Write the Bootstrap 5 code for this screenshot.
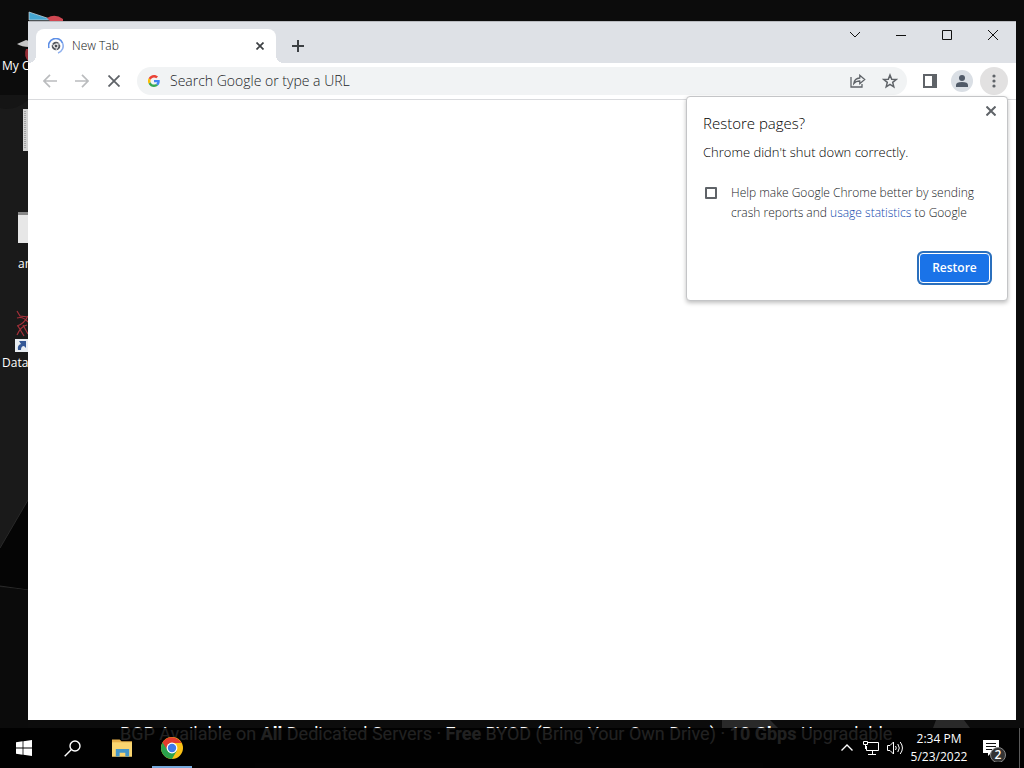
<!DOCTYPE html>
<html lang="en">
<head>
<meta charset="utf-8">
<meta name="viewport" content="width=device-width, initial-scale=1">
<title>New Tab</title>
<link href="https://cdn.jsdelivr.net/npm/bootstrap@5.3.0/dist/css/bootstrap.min.css" rel="stylesheet">
<style>
body { font-family: "Open Sans", "Noto Sans", sans-serif; font-size: 12px; font-weight: 300; line-height: 16px; background: #0c0c0c; }
button { border: 0; background: transparent; padding: 0; color: inherit; }
svg { display: block; flex: none; }
.wallpaper { top: 0; left: 0; }
.desk-label { color: #fff; font-weight: 400; left: 2px; white-space: nowrap; }
.banner { left: 120px; bottom: 19px; color: #fff; font-family: Roboto, "Open Sans", sans-serif; font-size: 18px; font-weight: 400; line-height: 30px; white-space: nowrap; }
.browser { top: 21px; left: 28px; right: 8px; bottom: 48px; background: #fff; }
.titlebar { height: 42px; background: #dee1e6; border-top: 1px solid #b9bbc0; padding-left: 8px; }
.tab { width: 240px; height: 34px; margin-top: 7px; padding: 0 8px 0 12px; background: #fff; border-radius: 8px 8px 0 0; color: #111; }
.tab::before, .tab::after { content: ""; position: absolute; bottom: 0; width: 8px; height: 8px; }
.tab::before { left: -8px; background: radial-gradient(circle at 0 0, transparent 8px, #fff 8px); }
.tab::after { right: -8px; background: radial-gradient(circle at 100% 0, transparent 8px, #fff 8px); }
.new-tab { width: 28px; height: 28px; margin: 10px 0 0 8px; }
.win-btn { width: 46px; height: 26px; color: #111; }
.toolbar { height: 37px; padding: 0 8px; border-bottom: 1px solid #d9dadd; }
.tool { width: 28px; height: 28px; color: #5f6368; }
.tool-dim { color: #babcbe; }
.tool-open { background: #e2e1e1; }
.omnibox { height: 28px; background: #f1f3f4; border-radius: 14px; padding: 0 3px 0 11px; margin: 0 9px 0 9px; }
.omnibox input { border: 0; background: transparent; outline: 0; padding: 0; margin-left: 10px; font-size: 14px; font-weight: 300; line-height: 20px; min-width: 0; }
.omnibox input::placeholder { color: #222427; opacity: 1; }
.bubble { top: 75px; right: 8px; width: 322px; height: 205px; padding: 16px 16px 16px; background: #fff; border: 1px solid #c4c5c7; border-radius: 4px; box-shadow: 0 2px 4px rgba(0,0,0,.25); color: #000; }
.bubble h1 { font-size: 15px; line-height: 20px; margin: 0 0 11px; font-weight: 300; }
.bubble p { font-size: 13px; line-height: 16px; margin: 0 0 23px; }
.bubble-close { top: 4px; right: 6px; width: 20px; height: 20px; color: #5f6368; }
.consent { padding-left: 2px; gap: 14px; line-height: 20px; color: #222427; }
.consent input { appearance: none; width: 12px; height: 12px; margin: 4px 0 0; border: 2px solid #5f6368; border-radius: 1px; flex: none; }
.consent a { color: #0f47ad; text-decoration: none; }
.restore { width: 71px; height: 30px; background: #1a73e8; color: #fff; font-weight: 600; border: 1px solid #fff; border-radius: 4px; box-shadow: 0 0 0 2px #2a6fbd; margin: 30px 1px 0 0; }
.taskbar { left: 0; right: 0; bottom: 0; height: 40px; background: rgba(0,0,0,.87); color: #fff; }
.task { width: 48px; height: 40px; }
.task-gap { margin-left: 2px; }
.task-active::after { content: ""; position: absolute; left: 4px; right: 4px; bottom: 0; height: 2px; background: #76a9dc; }
.tray { width: 24px; height: 40px; }
.clock { width: 64px; line-height: 18px; padding-top: 2px; font-weight: 400; }
.peek { width: 5px; border-left: 1px solid #5a5a5a; }
</style>
</head>
<body class="vh-100 overflow-hidden position-relative">
<svg class="wallpaper position-absolute w-100 h-100" aria-hidden="true">
  <rect y="95" width="40" height="500" fill="#1a1a1a"/>
  <path d="M0 95h28v5Q14 112 0 108z" fill="#151515"/>
  <path d="M0 548 28 500V590L0 586z" fill="#050505"/>
  <path d="M0 548 28 500M0 586l28 4" stroke="#292929" fill="none"/>
  <path d="M0 587l28 3v178H0z" fill="#0b0b0b"/>
  <path d="M722 720h48l8 8h-56zM936 720h28l6 8h-37z" fill="#292929"/>
  <path d="M29 12l24 8H29z" fill="#46a6d2" stroke="#c8d9e0" stroke-width=".7"/>
  <path d="M47 18q8-5 16 1v2H50z" fill="#d04852"/>
  <path d="M17 44l9-4 3 1v6q-7 0-12-3z" fill="#c5c5c5"/>
  <path d="M26 49h3v13q-6-6-3-13z" fill="#952c35"/>
  <path d="M23 109h6v42h-6z" fill="#d3d3d3"/>
  <path d="M25 111v38" stroke="#777" stroke-dasharray="1 1"/>
  <path d="M18 212h11v31H18z" fill="#e7e7e7"/><path d="M18 212h11v3H18z" fill="#888"/>
  <path d="M17 311l3 5 8 1M17 318q6-2 11 4M17 326q7-2 11-10M17 335q4-9 10-10M18 326l6 10M23 325l5 9" fill="none" stroke="#a5303a" stroke-width="1.200"/>
  <path d="M15 339h13v13H15z" fill="#e8edf2"/>
  <path d="M18 350q-1-5 3-6l-2-3h7v7l-2-2q-3 0-3 4z" fill="#345896"/>
</svg>
<div class="desk-label position-absolute" style="top:58px">My C</div>
<div class="desk-label position-absolute ps-3" style="top:256px">ar</div>
<div class="desk-label position-absolute" style="top:355px">Data</div>
<div class="banner position-absolute">BGP Available on <b>All</b> Dedicated Servers · <b>Free</b> BYOD (Bring Your Own Drive) · <b>10 Gbps</b> Upgradable</div>

<main class="browser position-absolute">
  <div class="titlebar d-flex align-items-start">
    <div class="tab d-flex align-items-center position-relative">
      <svg width="16" height="16" viewBox="0 0 16 16" fill="none"><path d="M1 10A7.200 7.200 0 0 1 14.500 5" stroke="#5c8ee6" stroke-width="1.600"/><path d="M14.500 5A7.200 7.200 0 0 1 10 14.900" stroke="#8fb0ee" stroke-width="1.600"/><circle cx="8" cy="8" r="4.300" fill="#555960"/><circle cx="8" cy="8" r="2" fill="#4a4d52" stroke="#fff"/><path d="M8 6h4M6.200 9 4.500 6M9.500 9.500 8 12" stroke="#fff" stroke-width=".8"/></svg>
      <span class="ms-2 flex-grow-1">New Tab</span>
      <button aria-label="Close tab" class="p-1"><svg width="8" height="8" viewBox="0 0 8 8" stroke="#3c4043" stroke-width="1.700"><path d="M.5.5l7 7M7.500.5l-7 7"/></svg></button>
    </div>
    <button class="new-tab d-flex align-items-center justify-content-center" aria-label="New tab"><svg width="12" height="12" viewBox="0 0 12 12" stroke="#3c4043" stroke-width="2"><path d="M6 0v12M0 6h12"/></svg></button>
    <div class="d-flex ms-auto">
      <button class="win-btn d-flex align-items-center justify-content-center" aria-label="Search tabs"><svg width="12" height="8" viewBox="0 0 12 8" fill="none" stroke="currentColor"><path d="M1 1l5 5 5-5"/></svg></button>
      <button class="win-btn d-flex align-items-center justify-content-center" aria-label="Minimize"><svg width="10" height="10" viewBox="0 0 10 10" stroke="currentColor"><path d="M0 5.500h10"/></svg></button>
      <button class="win-btn d-flex align-items-center justify-content-center" aria-label="Maximize"><svg width="10" height="10" viewBox="0 0 10 10" fill="none" stroke="currentColor"><path d="M.5.5h9v9h-9z"/></svg></button>
      <button class="win-btn d-flex align-items-center justify-content-center" aria-label="Close"><svg width="10" height="10" viewBox="0 0 10 10" stroke="currentColor"><path d="M0 0l10 10M10 0 0 10"/></svg></button>
    </div>
  </div>
  <div class="toolbar d-flex align-items-center">
    <div class="d-flex gap-1">
      <button class="tool tool-dim d-flex align-items-center justify-content-center" aria-label="Back"><svg width="14" height="14" viewBox="0 0 14 14" fill="none" stroke="currentColor" stroke-width="1.700"><path d="M14 7H1.500M7 .8.9 7 7 13.200"/></svg></button>
      <button class="tool tool-dim d-flex align-items-center justify-content-center" aria-label="Forward"><svg width="14" height="14" viewBox="0 0 14 14" fill="none" stroke="currentColor" stroke-width="1.700"><path d="M0 7h12.500M7 .8 13.100 7 7 13.200"/></svg></button>
      <button class="tool d-flex align-items-center justify-content-center" aria-label="Stop"><svg width="12" height="12" viewBox="0 0 12 12" stroke="currentColor" stroke-width="1.800"><path d="M.5.5l11 11M11.500.5l-11 11"/></svg></button>
    </div>
    <div class="omnibox d-flex align-items-center flex-grow-1">
      <svg width="12" height="12" viewBox="0 0 48 48"><path fill="#EA4335" d="M24 9.500c3.540 0 6.710 1.220 9.210 3.600l6.850-6.850C35.900 2.380 30.470 0 24 0 14.620 0 6.510 5.380 2.560 13.220l7.980 6.190C12.430 13.720 17.740 9.500 24 9.500z"/><path fill="#4285F4" d="M46.980 24.550c0-1.570-.15-3.090-.38-4.550H24v9.020h12.940c-.58 2.960-2.260 5.480-4.780 7.180l7.730 6C44.400 38.020 46.980 31.840 46.980 24.550z"/><path fill="#FBBC05" d="M10.530 28.590A14.500 14.500 0 0 1 10.530 19.410L2.560 13.220a24 24 0 0 0 0 21.560z"/><path fill="#34A853" d="M24 48c6.480 0 11.930-2.130 15.890-5.810l-7.730-6C30 37.640 27.240 38.490 24 38.490c-6.260 0-11.570-4.220-13.470-9.900l-7.970 6.190C6.510 42.620 14.620 48 24 48z"/></svg>
      <input class="flex-grow-1" type="text" aria-label="Address and search" placeholder="Search Google or type a URL">
      <div class="d-flex gap-1">
        <button class="tool d-flex align-items-center justify-content-center" aria-label="Share"><svg width="16" height="14" viewBox="0 0 16 14" fill="none" stroke="currentColor" stroke-width="1.300"><path d="M1 3v10h11v-3M3.800 9.500Q4.500 4.300 9.800 4V1.300L14.700 5.500 9.800 9.700V7Q6 6.800 3.800 9.500z"/></svg></button>
        <button class="tool d-flex align-items-center justify-content-center" aria-label="Bookmark"><svg width="16" height="16" viewBox="0 0 16 16" fill="none" stroke="currentColor" stroke-width="1.500"><path d="M8 2l1.700 4.200 4.500.3-3.500 2.900 1.100 4.400L8 11.400l-3.800 2.400 1.100-4.400L1.800 6.500l4.500-.3z"/></svg></button>
      </div>
    </div>
    <div class="d-flex gap-1">
      <button class="tool d-flex align-items-center justify-content-center" aria-label="Side panel"><svg width="14" height="14" viewBox="0 0 14 14"><path fill="currentColor" fill-rule="evenodd" d="M0 0h14v14H0zM2 2v10h7V2z"/></svg></button>
      <button class="tool d-flex align-items-center justify-content-center" aria-label="Profile"><svg width="22" height="22" viewBox="0 0 22 22"><circle cx="11" cy="11" r="11" fill="#dadfe5"/><circle cx="11" cy="8" r="3" fill="#505a68"/><path d="M5 17v-2Q5 12 11 12t6 3v2z" fill="#505a68"/></svg></button>
      <button class="tool tool-open rounded-circle d-flex align-items-center justify-content-center" aria-label="Menu"><svg width="4" height="14" viewBox="0 0 4 14" fill="currentColor"><circle cx="2" cy="2" r="1.600"/><circle cx="2" cy="7" r="1.600"/><circle cx="2" cy="12" r="1.600"/></svg></button>
    </div>
  </div>
  <section class="bubble position-absolute" aria-label="Restore pages">
    <button class="bubble-close position-absolute d-flex align-items-center justify-content-center" aria-label="Dismiss"><svg width="10" height="10" viewBox="0 0 10 10" stroke="currentColor" stroke-width="2"><path d="M.5.5l9 9M9.500.5l-9 9"/></svg></button>
    <h1>Restore pages?</h1>
    <p>Chrome didn't shut down correctly.</p>
    <div class="consent d-flex align-items-start">
      <input type="checkbox" id="consent">
      <label for="consent">Help make Google Chrome better by sending<br>crash reports and <a href="#">usage statistics</a> to Google</label>
    </div>
    <div class="d-flex justify-content-end"><button class="restore">Restore</button></div>
  </section>
</main>

<nav class="taskbar position-absolute d-flex">
  <button class="task d-flex align-items-center justify-content-center" aria-label="Start"><svg width="16" height="16" viewBox="0 0 16 16" fill="#fff"><path d="M0 2.300 6.600 1.300V7.600H0zM7.400 1.200 16 0v7.600H7.400zM0 8.400h6.600v6.300L0 13.700zM7.400 8.400H16V16l-8.600-1.200z"/></svg></button>
  <button class="task d-flex align-items-center justify-content-center" aria-label="Search"><svg width="17" height="17" viewBox="0 0 17 17" fill="none" stroke="#fff" stroke-width="1.400"><circle cx="11" cy="6" r="5"/><path d="M7.400 9.600.7 16.300"/></svg></button>
  <button class="task task-gap d-flex align-items-center justify-content-center" aria-label="File Explorer"><svg width="20" height="18" viewBox="0 0 21 18"><path d="M0 0h8l2 2h11v16H0z" fill="#e6b04a"/><path d="M0 3h21v15H0z" fill="#f9d570"/><path d="M4 10h14v8h-4v-4H8v4H4z" fill="#4496c9"/></svg></button>
  <button class="task task-gap task-active position-relative d-flex align-items-center justify-content-center" aria-label="Chrome"><svg width="22" height="22" viewBox="0 0 22 22"><circle cx="11" cy="11" r="11" fill="#fbc116"/><path d="M11 11 1.500 5.500A11 11 0 0 0 11 22l4.800-8.300z" fill="#2ba24c"/><path d="M1.500 5.500A11 11 0 0 1 20.500 6H11L6.700 13.500z" fill="#e33b2e"/><circle cx="11" cy="11" r="5.400" fill="#fff"/><circle cx="11" cy="11" r="4.200" fill="#3f79e8"/></svg></button>
  <div class="d-flex ms-auto">
    <button class="tray d-flex align-items-center justify-content-center" aria-label="Show hidden icons"><svg width="12" height="8" viewBox="0 0 12 8" fill="none" stroke="#fff" stroke-width="1.400"><path d="M.5 6.500 6 1l5.500 5.500"/></svg></button>
    <button class="tray d-flex align-items-center justify-content-center" aria-label="Network"><svg width="16" height="14" viewBox="0 0 16 14" fill="none" stroke="#fff"><path d="M5 1.500h10.500v8H3.500V5M9.500 9.500v4M5 13.500h8M.5.5h4v3h-4zM2.500 3.500V8"/></svg></button>
    <button class="tray d-flex align-items-center justify-content-center" aria-label="Volume"><svg width="17" height="14" viewBox="0 0 17 14" fill="none" stroke="#fff"><path d="M.5 4.500H3l3.500-3.500v12L3 9.500H.5zM8.500 5q1.500 2 0 4M10.800 3q3 4 0 8M13.200 1q4.500 6 0 12"/></svg></button>
    <div class="clock text-center"><div>2:34 PM</div><div>5/23/2022</div></div>
    <button class="task d-flex align-items-center justify-content-center" aria-label="2 notifications"><svg width="24" height="28" viewBox="0 0 24 28"><path d="M0 6h16v13H8l-3 3v-3H0z" fill="#fff"/><path d="M3 9.500h10M3 12.500h10M3 15.500h6" stroke="#111"/><circle cx="15" cy="21" r="7.500" fill="#333" stroke="#888"/><text x="15" y="25" text-anchor="middle" font-size="12" font-weight="600" fill="#fff">2</text></svg></button>
    <div class="peek"></div>
  </div>
</nav>
<script src="https://cdn.jsdelivr.net/npm/bootstrap@5.3.0/dist/js/bootstrap.bundle.min.js"></script>
</body>
</html>
